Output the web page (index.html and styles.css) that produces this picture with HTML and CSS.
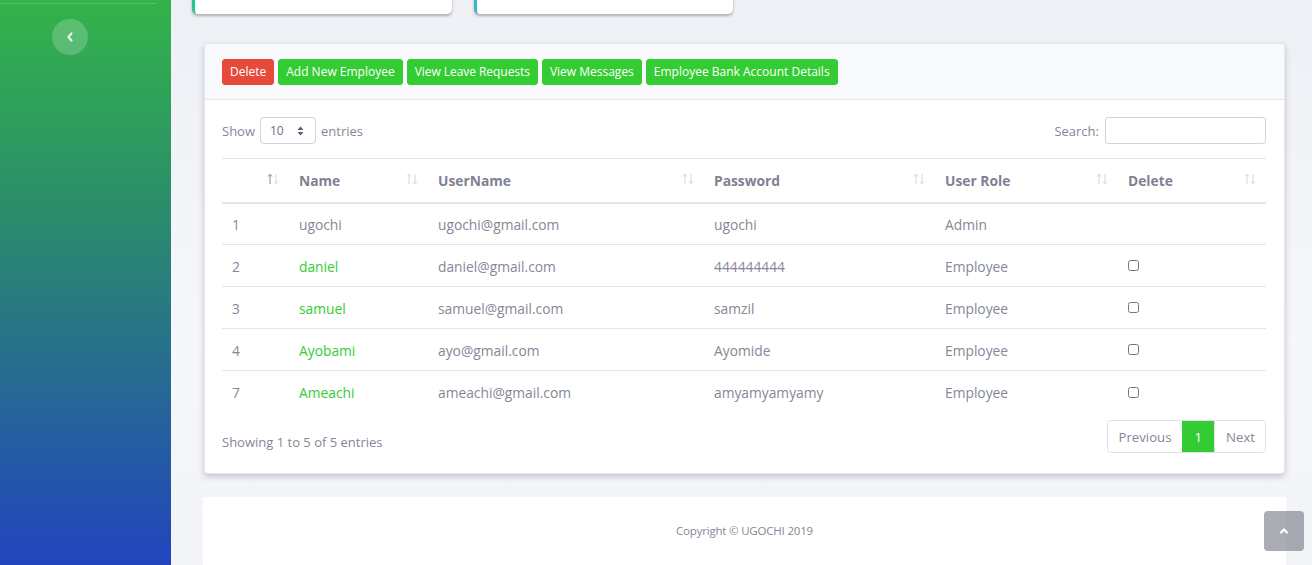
FILE: index.html
```html
<!DOCTYPE html>
<html>
<head>
<meta charset="utf-8">
<link rel="stylesheet" href="styles.css">
</head>
<body>
<div class="wrapper">
  <aside class="sidebar">
    <hr class="sidebar-divider">
    <div class="toggle-wrap">
      <button class="sidebar-toggle" aria-label="Collapse">
        <svg width="8" height="10" viewBox="0 0 8 10"><polyline points="5.5,1.5 2.5,5 5.5,8.5" fill="none" stroke="#e8f3ea" stroke-width="2.2" stroke-linecap="round" stroke-linejoin="round"/></svg>
      </button>
    </div>
  </aside>
  <main class="content">
    <div class="stat-row">
      <div class="stat-card success"></div>
      <div class="stat-card info"></div>
    </div>

    <section class="card">
      <div class="card-header">
        <button class="btn btn-danger">Delete</button>
        <button class="btn btn-success">Add New Employee</button>
        <button class="btn btn-success btn-tight">View Leave Requests</button>
        <button class="btn btn-success">View Messages</button>
        <button class="btn btn-success">Employee Bank Account Details</button>
      </div>
      <div class="card-body">
        <div class="dt-top">
          <label class="dt-length">Show
            <span class="fake-select">10
              <svg width="7" height="10" viewBox="0 0 7 10"><polygon points="3.5,0.5 6.5,4 0.5,4" fill="#5a5c69"/><polygon points="0.5,6 6.5,6 3.5,9.5" fill="#5a5c69"/></svg>
            </span>
            entries</label>
          <label class="dt-search">Search: <input type="text" class="search-input"></label>
        </div>
        <table class="dt">
          <colgroup>
            <col style="width:67px"><col style="width:139px"><col style="width:276px"><col style="width:231px"><col style="width:183px"><col style="width:148px">
          </colgroup>
          <thead>
            <tr>
              <th><div class="th-in"><span></span><svg class="sort" width="12" height="12" viewBox="0 0 12 12"><path d="M3 11V1.5M1 3.5L3 1.2L5 3.5" fill="none" stroke="#8a8c9c" stroke-width="1"/><path d="M9 1v9.5M7 8.5L9 10.8L11 8.5" fill="none" stroke="#d4d6e2" stroke-width="1"/></svg></div></th>
              <th><div class="th-in"><span>Name</span><svg class="sort" width="12" height="12" viewBox="0 0 12 12"><path d="M3 11V1.5M1 3.5L3 1.2L5 3.5" fill="none" stroke="#d4d6e2" stroke-width="1"/><path d="M9 1v9.5M7 8.5L9 10.8L11 8.5" fill="none" stroke="#d4d6e2" stroke-width="1"/></svg></div></th>
              <th><div class="th-in"><span>UserName</span><svg class="sort" width="12" height="12" viewBox="0 0 12 12"><path d="M3 11V1.5M1 3.5L3 1.2L5 3.5" fill="none" stroke="#d4d6e2" stroke-width="1"/><path d="M9 1v9.5M7 8.5L9 10.8L11 8.5" fill="none" stroke="#d4d6e2" stroke-width="1"/></svg></div></th>
              <th><div class="th-in"><span>Password</span><svg class="sort" width="12" height="12" viewBox="0 0 12 12"><path d="M3 11V1.5M1 3.5L3 1.2L5 3.5" fill="none" stroke="#d4d6e2" stroke-width="1"/><path d="M9 1v9.5M7 8.5L9 10.8L11 8.5" fill="none" stroke="#d4d6e2" stroke-width="1"/></svg></div></th>
              <th><div class="th-in"><span>User Role</span><svg class="sort" width="12" height="12" viewBox="0 0 12 12"><path d="M3 11V1.5M1 3.5L3 1.2L5 3.5" fill="none" stroke="#d4d6e2" stroke-width="1"/><path d="M9 1v9.5M7 8.5L9 10.8L11 8.5" fill="none" stroke="#d4d6e2" stroke-width="1"/></svg></div></th>
              <th><div class="th-in"><span>Delete</span><svg class="sort" width="12" height="12" viewBox="0 0 12 12"><path d="M3 11V1.5M1 3.5L3 1.2L5 3.5" fill="none" stroke="#d4d6e2" stroke-width="1"/><path d="M9 1v9.5M7 8.5L9 10.8L11 8.5" fill="none" stroke="#d4d6e2" stroke-width="1"/></svg></div></th>
            </tr>
          </thead>
          <tbody>
            <tr><td>1</td><td>ugochi</td><td>ugochi@gmail.com</td><td>ugochi</td><td>Admin</td><td></td></tr>
            <tr><td>2</td><td><a href="#">daniel</a></td><td>daniel@gmail.com</td><td>444444444</td><td>Employee</td><td><input type="checkbox" class="chk"></td></tr>
            <tr><td>3</td><td><a href="#">samuel</a></td><td>samuel@gmail.com</td><td>samzil</td><td>Employee</td><td><input type="checkbox" class="chk"></td></tr>
            <tr><td>4</td><td><a href="#">Ayobami</a></td><td>ayo@gmail.com</td><td>Ayomide</td><td>Employee</td><td><input type="checkbox" class="chk"></td></tr>
            <tr><td>7</td><td><a href="#">Ameachi</a></td><td>ameachi@gmail.com</td><td>amyamyamyamy</td><td>Employee</td><td><input type="checkbox" class="chk"></td></tr>
          </tbody>
        </table>
        <div class="dt-bottom">
          <div class="dt-info">Showing 1 to 5 of 5 entries</div>
          <ul class="pagination">
            <li class="page">Previous</li>
            <li class="page active">1</li>
            <li class="page">Next</li>
          </ul>
        </div>
      </div>
    </section>

    <footer class="footer">
      <span>Copyright © UGOCHI 2019</span>
    </footer>
  </main>
</div>
<a class="scroll-top" href="#" aria-label="Top">
  <svg width="10" height="8" viewBox="0 0 10 8"><polyline points="2,5.5 5,2.5 8,5.5" fill="none" stroke="#fff" stroke-width="2.2" stroke-linecap="round" stroke-linejoin="round"/></svg>
</a>
</body>
</html>
```

FILE: styles.css
```css
* { box-sizing: border-box; }
html, body { margin: 0; padding: 0; height: 100%; overflow: hidden; }
body {
  font-family: "Open Sans", "Liberation Sans", sans-serif;
  color: #858796;
  background: #f5f6fa;
}
.wrapper { display: flex; height: 565px; }

.sidebar {
  width: 171px;
  flex: 0 0 171px;
  background: linear-gradient(180deg, #33b34a 0%, #2a8a6e 40%, #2244bf 100%);
  display: flex;
  flex-direction: column;
}
.sidebar-divider {
  margin: 3px 15px 0 0;
  border: 0;
  border-top: 1px solid rgba(255,255,255,0.18);
  height: 0;
}
.toggle-wrap { display: flex; justify-content: center; padding: 15px 31px 0 0; }
.sidebar-toggle {
  width: 36px; height: 36px; border-radius: 50%;
  border: 0; padding: 0;
  background: rgba(255,255,255,0.2);
  display: flex; align-items: center; justify-content: center;
}

.content {
  flex: 1;
  padding: 0 26px 0 32px;
  display: flex;
  flex-direction: column;
  background: linear-gradient(180deg, #eef0f5 0%, #f6f7fb 60%, #f3f4f8 100%);
}

.stat-row {
  display: flex;
  gap: 22px;
  margin-left: -11px;
  height: 14px;
  align-items: flex-end;
}
.stat-card {
  width: 260px;
  height: 80px;
  flex: 0 0 auto;
  background: #fff;
  border-radius: 0 0 5px 5px;
  box-shadow: 0 2px 3px rgba(0,0,0,0.28);
}
.stat-card.success { border-left: 3px solid #1cc88a; }
.stat-card.info { border-left: 3px solid #36b9cc; width: 259px; }

.card {
  margin: 29px 1px 0 1px;
  background: #fff;
  border: 1px solid #e3e6f0;
  border-radius: 4px;
  box-shadow: 0 3px 6px rgba(58,59,69,0.25);
}
.card-header {
  background: #f8f9fc;
  border-bottom: 1px solid #e3e6f0;
  padding: 15px 17px 14px;
  display: flex;
  gap: 4px;
  border-radius: 4px 4px 0 0;
}
.btn {
  font-family: "Open Sans", "Liberation Sans", sans-serif;
  font-size: 12px;
  height: 26px;
  padding: 0 7px;
  border: 1px solid transparent;
  border-radius: 3px;
  color: #fff;
  line-height: 24px;
}
.btn-danger { background: #e74a3b; border-color: #e74a3b; }
.btn-success { background: #33cc33; border-color: #33cc33; }
.btn-tight { letter-spacing: -0.05px; }

.card-body { padding: 17px 18px 20px 17px; }

.dt-top {
  display: flex;
  justify-content: space-between;
  align-items: center;
  font-size: 13px;
  height: 27px;
}
.dt-length { display: flex; align-items: center; gap: 5px; }
.fake-select {
  display: inline-flex;
  align-items: center;
  justify-content: space-between;
  width: 56px; height: 27px;
  border: 1px solid #d1d3e2;
  border-radius: 4px;
  padding: 0 11px 0 9px;
  font-size: 12px;
  color: #6e707e;
}
.dt-search { display: flex; align-items: center; gap: 6px; margin-right: 0; }
.search-input {
  width: 161px; height: 27px;
  border: 1px solid #d1d3e2;
  border-radius: 3px;
  outline: none;
}

.dt {
  width: 1044px;
  margin-top: 14px;
  border-collapse: collapse;
  table-layout: fixed;
  font-size: 13.8px;
}
.dt th {
  border-top: 1px solid #e3e6f0;
  border-bottom: 2px solid #e3e6f0;
  height: 44px;
  padding: 1px 0 0 10px;
  text-align: left;
  font-weight: 700;
  color: #808192;
}
.th-in { display: flex; justify-content: space-between; align-items: center; padding-right: 10px; }
.sort { margin-top: -4px; }
.dt td {
  height: 42px;
  padding: 1px 0 0 10px;
  border-top: 1px solid #e3e6f0;
  vertical-align: middle;
}
.dt tbody tr:first-child td { border-top: 0; }
.dt a { color: #33cc33; text-decoration: none; }
.chk { margin: 0 0 4px 0; width: 11px; height: 11px; vertical-align: middle; }

.dt-bottom {
  display: flex;
  justify-content: space-between;
  align-items: center;
  margin-top: 7px;
  font-size: 13px;
}
.dt-info { padding-top: 11px; }
.pagination {
  display: flex; list-style: none; margin: 0; padding: 0;
  border: 1px solid #dddfeb; border-radius: 4px; overflow: hidden;
}
.page {
  height: 31px;
  line-height: 32px;
  padding: 0 10px 0 11px;
  font-size: 13.2px;
  color: #858796;
  background: #fff;
}
.page + .page { border-left: 1px solid #dddfeb; }
.page.active { background: #33cc33; color: #fff; border-color: #33cc33; padding: 0 12px; }

.footer {
  margin-top: 23px;
  flex: 1;
  background: #fff;
  display: flex;
  justify-content: center;
  padding-top: 26px;
  font-size: 11.5px;
  letter-spacing: -0.2px;
}
.scroll-top {
  position: fixed;
  right: 8px; bottom: 14px;
  width: 40px; height: 40px;
  border-radius: 4px;
  background: rgba(90,92,105,0.5);
  display: flex; align-items: center; justify-content: center;
}
```
